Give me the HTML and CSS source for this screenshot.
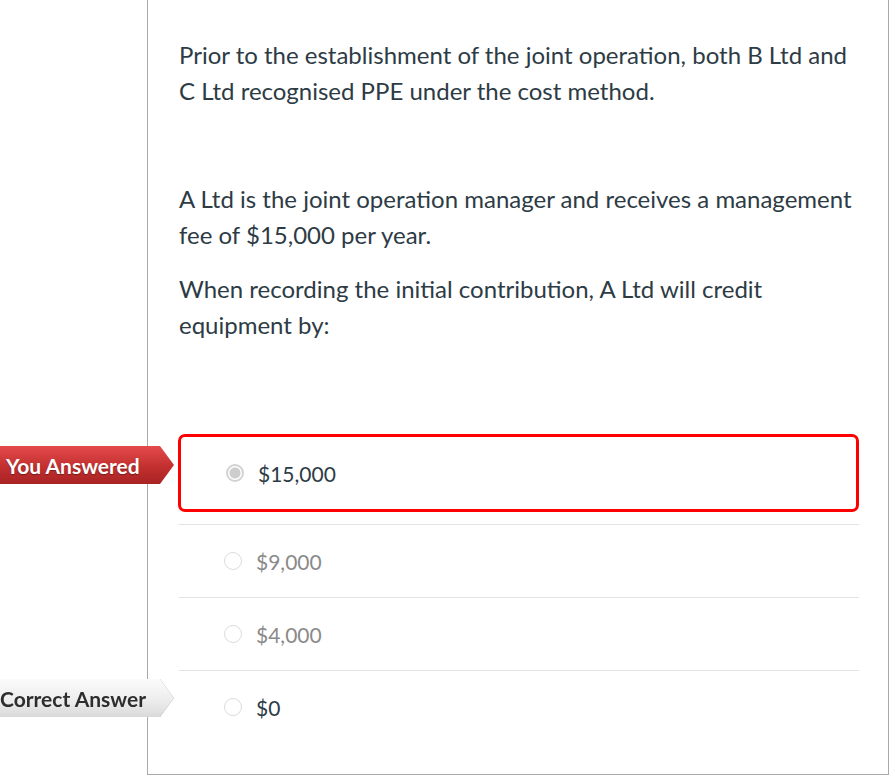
FILE: index.html
```html
<!DOCTYPE html>
<html>
<head>
<meta charset="utf-8">
<link rel="stylesheet" href="styles.css">
</head>
<body>
<div class="page">
  <div class="panel">
    <div class="question">
      <p>Prior to the establishment of the joint operation, both B Ltd and C Ltd recognised PPE under the cost method.</p>
      <p class="empty">&nbsp;</p>
      <p>A Ltd is the joint operation manager and receives a management fee of $15,000 per year.</p>
      <p>When recording the initial contribution, A Ltd will credit equipment by:</p>
    </div>
    <div class="answers">
      <div class="answer selected">
        <span class="badge badge-you"><span class="badge-shape">You Answered</span></span>
        <span class="radio checked"></span>
        <span class="label">$15,000</span>
      </div>
      <div class="answer muted">
        <span class="radio"></span>
        <span class="label">$9,000</span>
      </div>
      <div class="answer muted">
        <span class="radio"></span>
        <span class="label">$4,000</span>
      </div>
      <div class="answer">
        <span class="badge badge-correct"><span class="badge-shape">Correct Answer</span></span>
        <span class="radio"></span>
        <span class="label">$0</span>
      </div>
    </div>
  </div>
</div>
</body>
</html>
```

FILE: styles.css
```css
html, body {
  margin: 0;
  padding: 0;
  background: #ffffff;
}

body {
  font-family: Lato, "Liberation Sans", sans-serif;
  color: #2d3b45;
  width: 895px;
  height: 784px;
  overflow: hidden;
}

.page {
  padding-left: 147px;
}

.panel {
  width: 742px;
  height: 775px;
  border: 1px solid #a9a9a9;
  border-top: none;
  padding: 0 29px 0 31px;
  box-sizing: border-box;
}

.question {
  padding-top: 37px;
  font-size: 24px;
  line-height: 36px;
}

.question p {
  margin: 0 0 18px 0;
}

.answers {
  margin-top: 91px;
}

.answer {
  position: relative;
  display: flex;
  align-items: center;
  height: 72px;
  padding-left: 45px;
  border-top: 1px solid #e3e3e3;
  font-size: 21px;
}

.answer.selected {
  border: 3px solid #ff0000;
  border-radius: 7px;
  height: 72px;
  padding-left: 45px;
  margin-left: -1px;
  margin-bottom: 12px;
}

.answer.muted {
  color: #8a8a8a;
}

.radio {
  width: 18px;
  height: 18px;
  border-radius: 50%;
  border: 1.5px solid #dcdcdc;
  box-sizing: border-box;
  background: #fff;
  margin-right: 14px;
  flex: none;
}

.radio.checked {
  border: 2px solid #d2d2d2;
  background: radial-gradient(circle, #cdcdcd 0 5px, #fff 6px);
}

.badge {
  position: absolute;
  left: -179px;
  height: 38px;
  width: 174px;
  display: block;
}

.badge-shape {
  display: flex;
  align-items: center;
  height: 100%;
  width: 100%;
  font-size: 21px;
  font-weight: 700;
  clip-path: polygon(0 0, 160px 0, 174px 50%, 160px 100%, 0 100%);
  box-sizing: border-box;
  white-space: nowrap;
}

.badge-you {
  top: 9px;
  left: -181px;
}

.badge-you .badge-shape {
  padding-left: 6px;
  color: #ffffff;
  background: linear-gradient(#e44b4b, #c22f2f 55%, #a92323);
  text-shadow: 0 1px 1px rgba(0,0,0,0.35);
}

.badge-correct {
  top: 8px;
  filter: drop-shadow(0 0 0.6px rgba(0,0,0,0.45));
}

.badge-correct .badge-shape {
  padding-left: 0;
  color: #2d2d2d;
  background: linear-gradient(#fbfbfb, #ececec 60%, #d9d9d9);
}
```
